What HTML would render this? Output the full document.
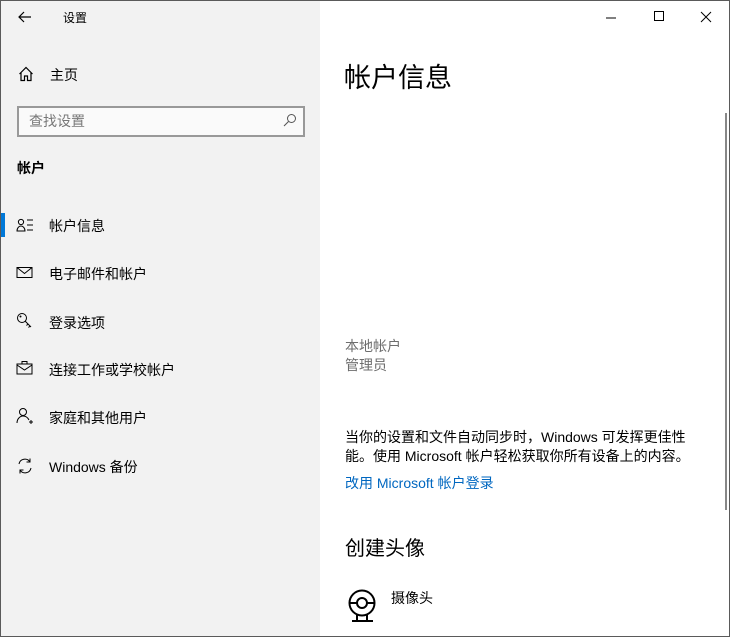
<!DOCTYPE html>
<html><head><meta charset="utf-8"><style>
*{margin:0;padding:0;box-sizing:border-box}
body{width:730px;height:637px;overflow:hidden;font-family:"Liberation Sans","Noto Sans CJK SC",sans-serif;font-size:14px;color:#000;background:#fff;position:relative}
.frame{position:absolute;left:0;top:0;width:730px;height:637px;border:1px solid #5a5a5a;pointer-events:none;z-index:5}
.side{position:absolute;left:0;top:0;width:320px;height:637px;background:#f2f2f2}
.a{position:absolute;white-space:nowrap}
.nav{position:absolute;left:49px;font-size:14px}
.ic{position:absolute;left:16px}
</style></head><body>
<div class="side">
<svg class="a" style="left:17px;top:10px" width="16" height="14" viewBox="0 0 16 14"><path d="M14 7H2M7 2L2 7l5 5" fill="none" stroke="#000" stroke-width="1.2"/></svg>
<div class="a" style="left:63px;top:9px;font-size:12px">设置</div>
<svg class="a" style="left:18px;top:66px" width="16" height="16" viewBox="0 0 16 16"><path d="M1.5 8L8 1.5 14.5 8M3 6.5V14.5H6.5V10H9.5V14.5H13V6.5" fill="none" stroke="#000" stroke-width="1.2"/></svg>
<div class="a" style="left:50px;top:65px">主页</div>
<div class="a" style="left:17px;top:106px;width:288px;height:31px;border:2px solid #999;background:#fafafa"></div>
<div class="a" style="left:29px;top:111px;color:#777">查找设置</div>
<svg class="a" style="left:283px;top:113px" width="14" height="14" viewBox="0 0 14 14"><circle cx="8.5" cy="5.5" r="4" fill="none" stroke="#555" stroke-width="1"/><path d="M5.5 8.5L1 13" stroke="#555" stroke-width="1.1"/></svg>
<div class="a" style="left:17px;top:158px;font-weight:bold">帐户</div>
<div class="a" style="left:1px;top:213px;width:4px;height:24px;background:#0078d7"></div>
<svg class="ic a" style="top:218px" width="20" height="14" viewBox="0 0 20 14"><circle cx="5" cy="4" r="2.6" fill="none" stroke="#000"/><path d="M1 13c0-3 2-5 4-5s4 2 4 5z" fill="none" stroke="#000"/><path d="M11 2h6M11 7h6M11 12h6" stroke="#000"/></svg>
<div class="nav" style="top:216px">帐户信息</div>
<svg class="ic a" style="top:266px" width="18" height="14" viewBox="0 0 18 14"><rect x="1" y="1.5" width="15" height="10" fill="none" stroke="#000"/><path d="M1 1.5l7.5 6 7.5-6" fill="none" stroke="#000"/></svg>
<div class="nav" style="top:264px">电子邮件和帐户</div>
<svg class="ic a" style="top:312px" width="18" height="18" viewBox="0 0 18 18"><circle cx="6" cy="6" r="4.5" fill="none" stroke="#000"/><circle cx="4.5" cy="4.5" r="1" fill="#000"/><path d="M9 9l6 6M12 12l-1.5 1.5M14 14l-1.5 1.5" fill="none" stroke="#000"/></svg>
<div class="nav" style="top:313px">登录选项</div>
<svg class="ic a" style="top:360px" width="18" height="16" viewBox="0 0 18 16"><rect x="1" y="4" width="15" height="10" fill="none" stroke="#000"/><path d="M6 4V1.5h5V4M1 5l7.5 5 7.5-5" fill="none" stroke="#000"/></svg>
<div class="nav" style="top:360px">连接工作或学校帐户</div>
<svg class="ic a" style="top:407px" width="20" height="18" viewBox="0 0 20 18"><circle cx="7" cy="5" r="3.5" fill="none" stroke="#000"/><path d="M1 16c0-4 3-7 6-7s5 2 6 4" fill="none" stroke="#000"/><path d="M13 15h4M15 13v4" stroke="#000"/></svg>
<div class="nav" style="top:408px">家庭和其他用户</div>
<svg class="ic a" style="top:457px" width="18" height="18" viewBox="0 0 18 18"><path d="M3 7a6 6 0 0 1 11-2M15 11a6 6 0 0 1-11 2M14 1.5v3.5h-3.5M4 16.5V13h3.5" fill="none" stroke="#000"/></svg>
<div class="nav" style="top:457px">Windows 备份</div>
</div>
<svg class="a" style="left:606px;top:17px" width="10" height="2"><path d="M0 1h10" stroke="#000"/></svg>
<svg class="a" style="left:654px;top:11px" width="11" height="11"><rect x=".5" y=".5" width="9" height="9" fill="none" stroke="#000"/></svg>
<svg class="a" style="left:700px;top:11px" width="12" height="12"><path d="M1 1l10 10M11 1L1 11" stroke="#000"/></svg>
<div class="a" style="left:725px;top:113px;width:2px;height:397px;background:#888"></div>
<div class="a" style="left:344px;top:56px;font-size:27px">帐户信息</div>
<div class="a" style="left:345px;top:336px;color:#6d6d6d">本地帐户</div>
<div class="a" style="left:345px;top:355px;color:#6d6d6d">管理员</div>
<div class="a" style="left:345px;top:428px;line-height:19px">当你的设置和文件自动同步时，Windows 可发挥更佳性<br>能。使用 Microsoft 帐户轻松获取你所有设备上的内容。</div>
<div class="a" style="left:345px;top:473px;color:#0067c0">改用 Microsoft 帐户登录</div>
<div class="a" style="left:345px;top:532px;font-size:20px">创建头像</div>
<svg class="a" style="left:347px;top:588px" width="32" height="36" viewBox="0 0 32 36"><circle cx="15" cy="15" r="12.5" fill="none" stroke="#000" stroke-width="2"/><circle cx="15" cy="15" r="5" fill="none" stroke="#000" stroke-width="2"/><path d="M3 15h7M20 15h7M10 27v5M20 27v5M5 33h21" fill="none" stroke="#000" stroke-width="2"/></svg>
<div class="a" style="left:391px;top:588px">摄像头</div>
<div class="frame"></div>
</body></html>
